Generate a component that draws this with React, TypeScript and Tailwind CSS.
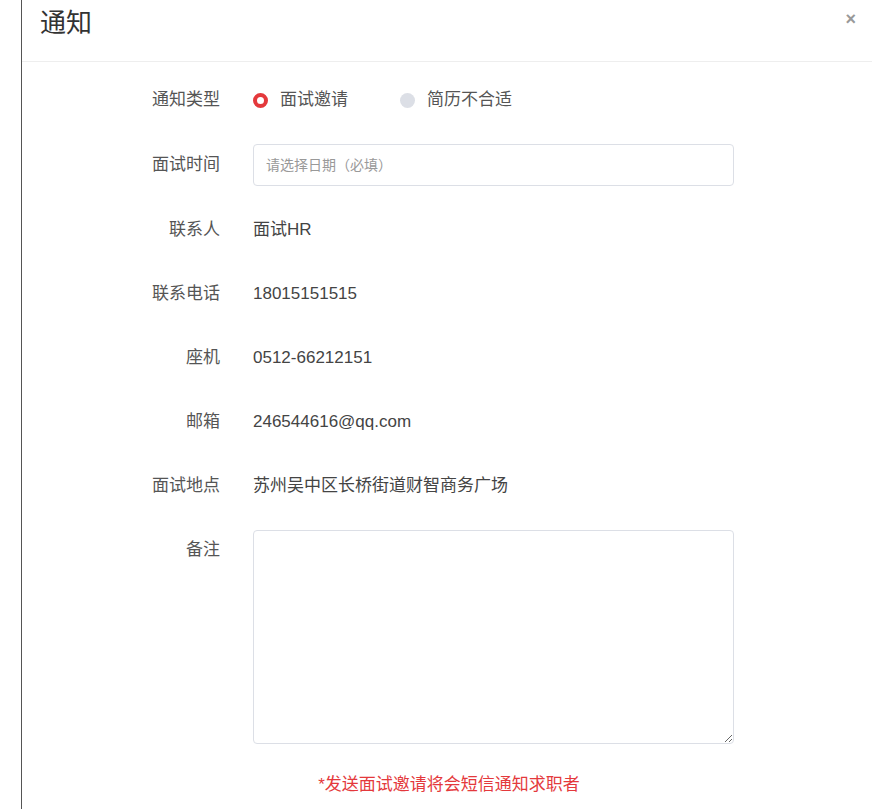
import React from 'react';

const font = { fontFamily: '"Liberation Sans", "Noto Sans CJK SC", sans-serif' };

interface RowProps {
  label: string;
  children: React.ReactNode;
  top?: boolean;
}

const Row: React.FC<RowProps> = ({ label, children, top }) => (
  <div className={`flex ${top ? 'items-start' : 'items-center'} min-h-[40px]`}>
    <div className="w-[100px] shrink-0 text-right text-[17px] leading-[40px] text-[#555]">{label}</div>
    <div className="ml-[33px] flex-1 flex items-center text-[17px] text-[#444]">{children}</div>
  </div>
);

const App: React.FC = () => {
  const [type, setType] = React.useState<'invite' | 'reject'>('invite');

  return (
    <div className="w-[879px] h-[809px] bg-white flex overflow-hidden" style={font}>
      <div className="w-[21px] shrink-0 bg-white" />
      <div className="flex-1 border-l-[1.5px] border-[#555] flex flex-col">
        {/* Header */}
        <div className="w-[850px] h-[62px] shrink-0 border-b border-[#eee] flex items-start justify-between pl-[18px] pr-[16px]">
          <h1 className="pt-[8px] text-[26px] leading-[30px] text-[#333]">通知</h1>
          <button className="pt-[9px] text-[#999] text-[18px] leading-[20px] font-bold">×</button>
        </div>

        {/* Form */}
        <div className="w-[850px] pl-[98px] pt-[18px] flex flex-col gap-[24px]">
          <Row label="通知类型">
            <label className="flex items-center cursor-pointer" onClick={() => setType('invite')}>
              <span
                className={`w-[15px] h-[15px] rounded-full ${
                  type === 'invite' ? 'border-[4px] border-[#e4393c] bg-white' : 'bg-[#dcdfe6]'
                }`}
              />
              <span className="ml-[12px] text-[#555]">面试邀请</span>
            </label>
            <label className="flex items-center cursor-pointer ml-[52px]" onClick={() => setType('reject')}>
              <span
                className={`w-[15px] h-[15px] rounded-full ${
                  type === 'reject' ? 'border-[4px] border-[#e4393c] bg-white' : 'bg-[#dcdfe6]'
                }`}
              />
              <span className="ml-[12px] text-[#555]">简历不合适</span>
            </label>
          </Row>

          <Row label="面试时间">
            <input
              className="w-[481px] h-[42px] border border-[#dcdfe6] rounded-[4px] pl-[12px] text-[14px] text-[#444] placeholder:text-[#999] outline-none"
              placeholder="请选择日期（必填）"
            />
          </Row>

          <Row label="联系人">面试HR</Row>
          <Row label="联系电话">18015151515</Row>
          <Row label="座机">0512-66212151</Row>
          <Row label="邮箱">246544616@qq.com</Row>
          <Row label="面试地点">苏州吴中区长桥街道财智商务广场</Row>

          <Row label="备注" top>
            <textarea className="w-[481px] h-[214px] border border-[#dcdfe6] rounded-[4px] p-[8px] text-[14px] outline-none" />
          </Row>
        </div>

        <p className="w-[850px] text-center pt-[28px] pl-[4px] text-[17px] text-[#e4393c]">*发送面试邀请将会短信通知求职者</p>
      </div>
    </div>
  );
};

export default App;
